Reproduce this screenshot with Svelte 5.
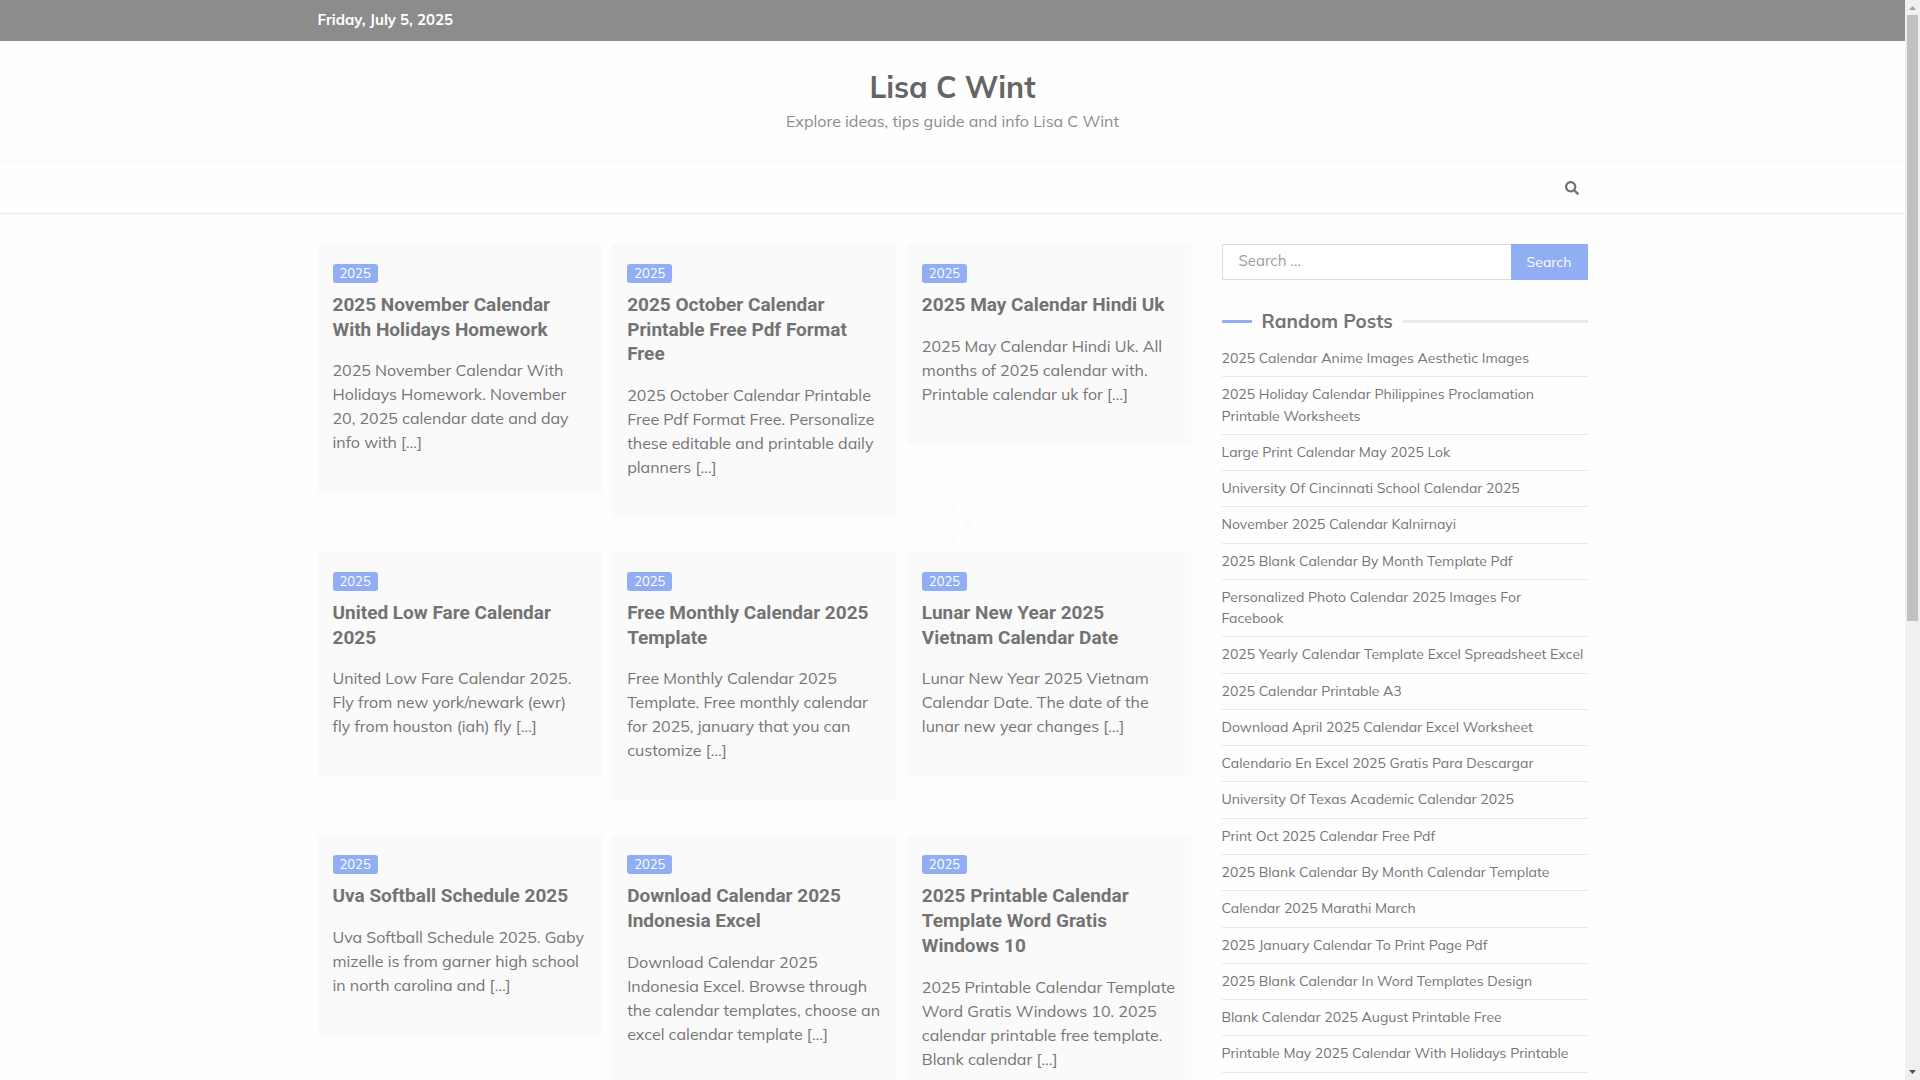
<script>
  const posts = [
    {
      title: "2025 November Calendar With Holidays Homework",
      excerpt: "2025 November Calendar With Holidays Homework. November 20, 2025 calendar date and day info with […]",
    },
    {
      title: "2025 October Calendar Printable Free Pdf Format Free",
      excerpt: "2025 October Calendar Printable Free Pdf Format Free. Personalize these editable and printable daily planners […]",
    },
    {
      title: "2025 May Calendar Hindi Uk",
      excerpt: "2025 May Calendar Hindi Uk. All months of 2025 calendar with. Printable calendar uk for […]",
    },
    {
      title: "United Low Fare Calendar 2025",
      excerpt: "United Low Fare Calendar 2025. Fly from new york/newark (ewr) fly from houston (iah) fly […]",
    },
    {
      title: "Free Monthly Calendar 2025 Template",
      excerpt: "Free Monthly Calendar 2025 Template. Free monthly calendar for 2025, january that you can customize […]",
    },
    {
      title: "Lunar New Year 2025 Vietnam Calendar Date",
      excerpt: "Lunar New Year 2025 Vietnam Calendar Date. The date of the lunar new year changes […]",
    },
    {
      title: "Uva Softball Schedule 2025",
      excerpt: "Uva Softball Schedule 2025. Gaby mizelle is from garner high school in north carolina and […]",
    },
    {
      title: "Download Calendar 2025 Indonesia Excel",
      excerpt: "Download Calendar 2025 Indonesia Excel. Browse through the calendar templates, choose an excel calendar template […]",
    },
    {
      title: "2025 Printable Calendar Template Word Gratis Windows 10",
      excerpt: "2025 Printable Calendar Template Word Gratis Windows 10. 2025 calendar printable free template. Blank calendar […]",
    },
  ];

  const randomPosts = [
    "2025 Calendar Anime Images Aesthetic Images",
    "2025 Holiday Calendar Philippines Proclamation Printable Worksheets",
    "Large Print Calendar May 2025 Lok",
    "University Of Cincinnati School Calendar 2025",
    "November 2025 Calendar Kalnirnayi",
    "2025 Blank Calendar By Month Template Pdf",
    "Personalized Photo Calendar 2025 Images For\nFacebook",
    "2025 Yearly Calendar Template Excel Spreadsheet Excel",
    "2025 Calendar Printable A3",
    "Download April 2025 Calendar Excel Worksheet",
    "Calendario En Excel 2025 Gratis Para Descargar",
    "University Of Texas Academic Calendar 2025",
    "Print Oct 2025 Calendar Free Pdf",
    "2025 Blank Calendar By Month Calendar Template",
    "Calendar 2025 Marathi March",
    "2025 January Calendar To Print Page Pdf",
    "2025 Blank Calendar In Word Templates Design",
    "Blank Calendar 2025 August Printable Free",
    "Printable May 2025 Calendar With Holidays Printable",
  ];

  // angles of the preloader dots
  const dots = [0, 45, 90, 135, 180, 225, 270, 315];

  let query = "";
</script>

<div class="window">
  <div class="page">
    <div class="topbar">
      <div class="container">Friday, July 5, 2025</div>
    </div>

    <header>
      <h1><a href="#home">Lisa C Wint</a></h1>
      <p>Explore ideas, tips guide and info Lisa C Wint</p>
    </header>

    <nav>
      <div class="container">
        <button class="search-toggle" aria-label="Open search">
          <svg viewBox="0 0 512 512" width="14" height="14">
            <path
              d="M505 442.700L405.300 343c-4.500-4.500-10.600-7-17-7H372c27.600-35.300 44-79.700 44-128C416 93.100 322.900 0 208 0S0 93.100 0 208s93.100 208 208 208c48.300 0 92.700-16.400 128-44v16.300c0 6.400 2.500 12.500 7 17l99.700 99.700c9.400 9.400 24.600 9.400 33.900 0l28.300-28.300c9.400-9.400 9.400-24.600.1-34zM208 336c-70.700 0-128-57.200-128-128 0-70.700 57.200-128 128-128 70.700 0 128 57.200 128 128 0 70.700-57.200 128-128 128z"
            />
          </svg>
        </button>
      </div>
    </nav>

    <div class="container content">
      <main>
        {#each posts as post}
          <article>
            <a class="category" href="#2025">2025</a>
            <h2><a href="#post">{post.title}</a></h2>
            <p>{post.excerpt}</p>
          </article>
        {/each}
      </main>

      <aside>
        <form on:submit|preventDefault>
          <input type="search" placeholder="Search …" aria-label="Search for:" bind:value={query} />
          <button type="submit">Search</button>
        </form>

        <h2 class="widget-title">Random Posts</h2>
        <ul>
          {#each randomPosts as item}
            <li><a href="#post">{item}</a></li>
          {/each}
        </ul>
      </aside>
    </div>

    <div class="preloader">
      <svg viewBox="-20 -20 40 40" width="40" height="40">
        {#each dots as angle}
          <circle cy="-15" r="4" fill={angle === 0 ? "#fdfafa" : "#fcfcfc"} transform="rotate({angle})" />
        {/each}
      </svg>
    </div>
  </div>

  <div class="scrollbar">
    <svg viewBox="0 0 15 15" width="15" height="15"><path d="M4 10h7L7.500 6z" fill="#a3a3a3" /></svg>
    <div class="track"><div class="thumb"></div></div>
    <svg viewBox="0 0 15 15" width="15" height="15"><path d="M4 5h7L7.500 9z" fill="#505050" /></svg>
  </div>
</div>

<style>
  :global(body) {
    background-color: #fefefe;
  }

  .window {
    display: flex;
    height: 100vh;
    overflow: hidden;
    font-family: Muli, Mulish, "Open Sans", sans-serif;
    font-size: 16px;
    line-height: 24px;
    color: #757575;
  }

  .page {
    position: relative;
    flex: 1;
    min-width: 0;
    overflow: hidden;
  }

  .container {
    max-width: 1270px;
    margin: 0 auto;
  }

  a {
    color: inherit;
    text-decoration: none;
  }

  h1,
  h2,
  p,
  ul {
    margin: 0;
    padding: 0;
  }

  .topbar {
    padding: 8px 0 9px;
    background-color: #8c8c8c;
    color: #ffffff;
    font-size: 15px;
    font-weight: 700;
  }

  header {
    padding: 28px 0 29px;
    text-align: center;
    color: #8c8c8c;
  }

  h1 {
    font-size: 30px;
    font-weight: 700;
    line-height: 36px;
    margin-bottom: 4px;
    color: #656565;
  }

  nav {
    border-top: 1px solid #f9f9f9;
    border-bottom: 1px solid #e8e8e8;
    box-shadow: 0 0 3px #f6f6f6;
  }

  nav .container {
    display: flex;
    justify-content: flex-end;
  }

  .search-toggle {
    display: flex;
    align-items: center;
    height: 50px;
    padding: 0 9px;
    border: 0;
    background: none;
    fill: #737373;
  }

  .content {
    display: grid;
    grid-template-columns: 1fr 366px;
    gap: 30px;
    margin-top: 30px;
  }

  main {
    display: grid;
    grid-template-columns: repeat(3, 1fr);
    align-items: start;
    gap: 34px 10px;
  }

  article {
    padding: 20px 15px 39px;
    background-color: #fafafa;
  }

  .category {
    display: block;
    width: fit-content;
    padding: 0 7px;
    border-radius: 3px;
    background-color: #91adf3;
    color: #ffffff;
    font-size: 13px;
    line-height: 19px;
  }

  article h2 {
    margin: 10px 0 16px;
    font-family: Roboto, sans-serif;
    font-size: 19px;
    font-weight: 700;
    line-height: 1.3;
    color: #737373;
  }

  form {
    display: flex;
    height: 36px;
  }

  input {
    flex: 1;
    min-width: 0;
    box-sizing: border-box;
    padding: 0 16px 2px;
    border: 1px solid #dddddd;
    border-right: 0;
    background-color: #ffffff;
    font: inherit;
    font-size: 15px;
    color: #757575;
  }

  input::placeholder {
    color: #a0a0a0;
  }

  form button {
    width: 77px;
    padding: 0;
    border: 0;
    background-color: #91adf3;
    font: inherit;
    font-size: 14px;
    color: #ffffff;
  }

  .widget-title {
    display: flex;
    align-items: center;
    gap: 10px;
    margin: 29px 0 8px;
    font-size: 19px;
    font-weight: 700;
    line-height: 24px;
    color: #757575;
  }

  .widget-title::before,
  .widget-title::after {
    content: "";
    width: 30px;
    height: 3px;
    background-color: #91adf3;
  }

  .widget-title::after {
    flex: 1;
    background-color: #e9e9e9;
  }

  ul {
    list-style: none;
  }

  li {
    padding: 7px 0;
    border-bottom: 1px solid #e8e8e8;
    font-size: 14px;
    line-height: 1.52;
    white-space: pre-line;
  }

  .preloader {
    position: absolute;
    inset: 0;
    display: grid;
    place-items: center;
    padding-bottom: 30px;
    pointer-events: none;
  }

  .scrollbar {
    display: flex;
    flex-direction: column;
    width: 15px;
    background-color: #f0f0f0;
  }

  .track {
    flex: 1;
  }

  .thumb {
    height: 57.7%;
    margin: 0 2px;
    background-color: #c0c0c0;
  }
</style>
